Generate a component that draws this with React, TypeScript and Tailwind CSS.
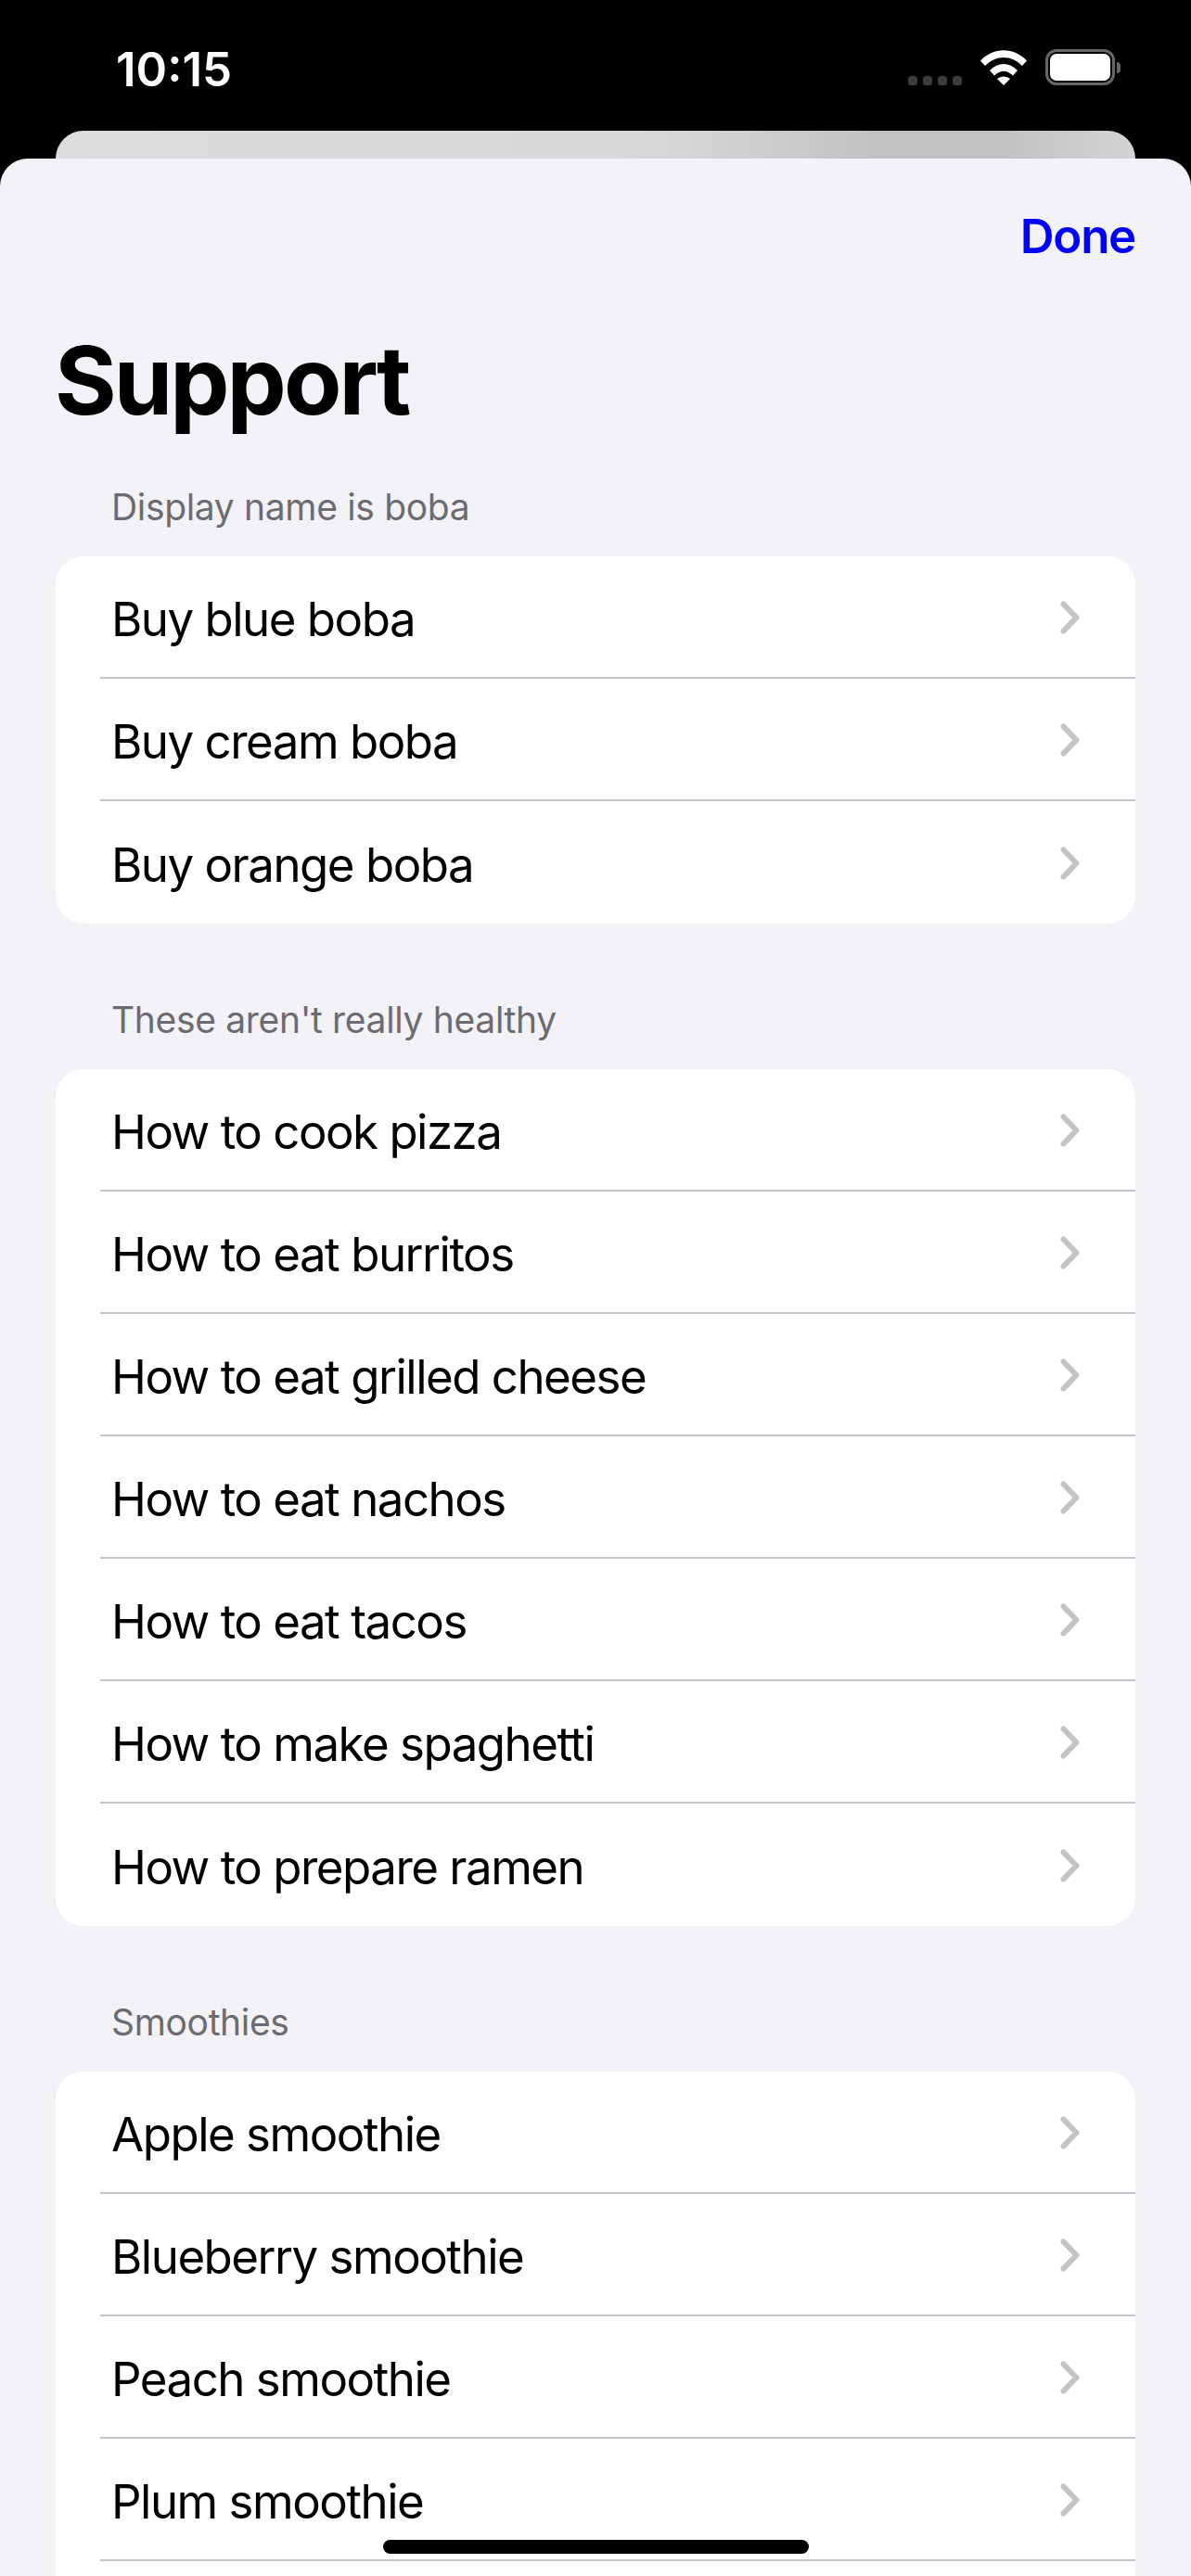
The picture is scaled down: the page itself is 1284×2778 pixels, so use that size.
import React from 'react';

const sections = [
  {
    title: 'Display name is boba',
    items: ['Buy blue boba', 'Buy cream boba', 'Buy orange boba'],
  },
  {
    title: "These aren't really healthy",
    items: [
      'How to cook pizza',
      'How to eat burritos',
      'How to eat grilled cheese',
      'How to eat nachos',
      'How to eat tacos',
      'How to make spaghetti',
      'How to prepare ramen',
    ],
  },
  {
    title: 'Smoothies',
    items: ['Apple smoothie', 'Blueberry smoothie', 'Peach smoothie', 'Plum smoothie', ''],
  },
];

const Chevron: React.FC = () => (
  <svg width="21" height="36" viewBox="0 0 21 36" fill="none" className="mt-[2px] shrink-0">
    <path
      d="M3.5 3.5 L17.5 18 L3.5 32.5"
      stroke="#c4c4c6"
      strokeWidth="6"
      strokeLinecap="round"
      strokeLinejoin="round"
    />
  </svg>
);

const StatusBar: React.FC = () => (
  <div className="flex h-[141px] shrink-0 items-start justify-between bg-black pl-[125px] pr-[76px] pt-[43px]">
    <span className="mt-[2px] text-[51px] font-semibold leading-[60px] text-white">10:15</span>
    <div className="flex items-center pt-[10px]">
      <div className="mr-[20px] mt-[28px] flex gap-[6px]">
        <span className="h-[10px] w-[10px] rounded-[3px] bg-[#3c3c3c]" />
        <span className="h-[10px] w-[10px] rounded-[3px] bg-[#3c3c3c]" />
        <span className="h-[10px] w-[10px] rounded-[3px] bg-[#3c3c3c]" />
        <span className="h-[10px] w-[10px] rounded-[3px] bg-[#3c3c3c]" />
      </div>
      <svg className="mr-[20px]" width="50" height="38" viewBox="0 0 50 38" fill="#fff">
        <path d="M0 11.5 C14 -3.5 36 -3.5 50 11.5 L45 17 C33 5 17 5 5 17 Z" />
        <path d="M10 22 C19 12.5 31 12.5 40 22 L35 27.5 C28.5 21 21.5 21 15 27.5 Z" />
        <path d="M18 31 C22 27.5 28 27.5 32 31 L25 38 Z" />
      </svg>
      <div className="flex items-center">
        <div className="h-[39px] w-[75px] rounded-[12px] border-[3px] border-[#666666] p-[2px]">
          <div className="h-full w-full rounded-[7px] bg-white" />
        </div>
        <div className="ml-[2px] h-[12px] w-[4px] rounded-r-full bg-[#666666]" />
      </div>
    </div>
  </div>
);

const App: React.FC = () => {
  return (
    <div className="relative flex h-[2778px] w-[1284px] flex-col overflow-hidden bg-black font-['Inter',sans-serif]">
      <StatusBar />
      <div className="mx-[60px] h-[30px] shrink-0 rounded-t-[30px] bg-[linear-gradient(90deg,#dcdcdc_0%,#d8d8d8_56%,#c2c2c2_76%,#c2c2c2_88%,#d4d4d4_100%)]" />
      <div className="flex-1 overflow-hidden rounded-t-[30px] bg-[#f2f2f7] px-[60px]">
        <div className="flex h-[178px] items-start justify-end pt-[54px]">
          <span className="text-[51px] font-semibold leading-[60px] tracking-[-1.25px] text-[#0000ff]">Done</span>
        </div>
        <h1 className="ml-[-1px] text-[102px] font-bold leading-[122px] tracking-[-3px] text-black">Support</h1>
        <div className="mt-[52px] flex flex-col gap-[80px]">
          {sections.map((section) => (
            <div key={section.title}>
              <div className="h-[77px] pl-[60px] text-[39px] leading-[48px] tracking-[-0.33px] text-[#6c6c70]">
                {section.title}
              </div>
              <div className="overflow-hidden rounded-[30px] bg-white">
                {section.items.map((item, i) => (
                  <div key={item} className="flex h-[132px] pl-[48px]">
                    <div
                      className={`flex flex-1 items-center justify-between pl-[12px] pr-[60px] ${
                        i < section.items.length - 1 ? 'border-b-[2px] border-[#c6c6c8]' : ''
                      }`}
                    >
                      {item && (
                        <>
                          <span className="mt-[5px] text-[51px] leading-[60px] tracking-[-1.5px] text-black">
                            {item}
                          </span>
                          <Chevron />
                        </>
                      )}
                    </div>
                  </div>
                ))}
              </div>
            </div>
          ))}
        </div>
      </div>
      <div className="absolute bottom-[24px] left-[413px] h-[15px] w-[459px] rounded-full bg-black" />
    </div>
  );
};

export default App;
